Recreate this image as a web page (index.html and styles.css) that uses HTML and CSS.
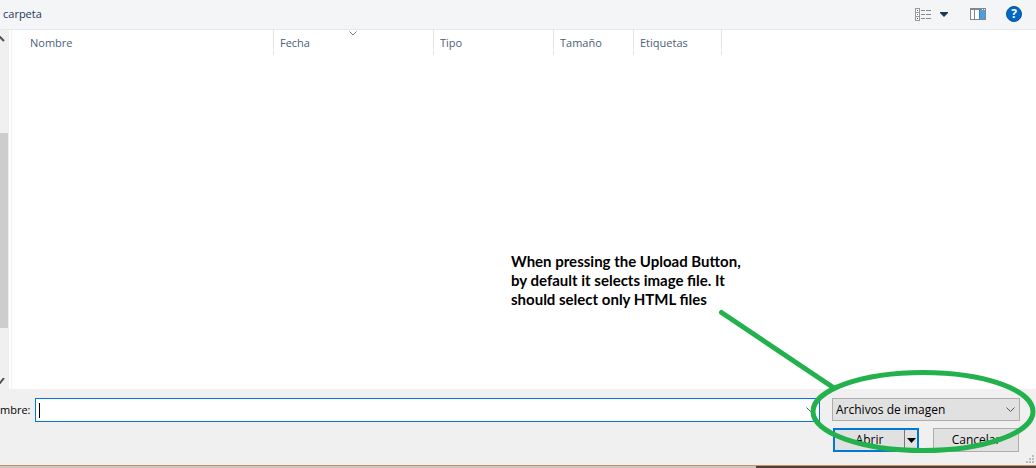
FILE: index.html
```html
<!DOCTYPE html>
<html lang="es">
<head>
<meta charset="utf-8">
<title>Abrir</title>
<link rel="stylesheet" href="styles.css">
</head>
<body>
<div class="dialog">
  <header class="toolbar">
    <a class="new-folder" href="#">carpeta</a>
    <button class="tool view" type="button" aria-label="Cambiar la vista">
      <svg width="16" height="13" viewBox="0 0 16 13" shape-rendering="crispEdges">
        <path d="M.5.5h4v12h-4zM0 4.500h5M0 8.500h5" fill="#fff" stroke="#999"/>
        <path d="M6 2.500h4m1 0h5M6 6.500h4m1 0h5M6 10.500h4m1 0h5" stroke="#888"/>
        <path d="M2 2h1v1H2z" fill="#555"/><path d="M2 6h1v1H2z" fill="#3b86d0"/><path d="M2 10h1v1H2z" fill="#a33"/>
      </svg>
    </button>
    <button class="tool more" type="button" aria-label="Más opciones">
      <svg width="8" height="5" viewBox="0 0 8 5"><path d="M0 0h8v1L4 5 0 1z" fill="#1e395b"/></svg>
    </button>
    <button class="tool pane" type="button" aria-label="Panel de vista previa">
      <svg width="16" height="12" viewBox="0 0 16 12" shape-rendering="crispEdges">
        <path d="M0 0h16v12H0z" fill="#858585"/>
        <path d="M1 2h3v9H1zM5 2h4v9H5z" fill="#fff"/><path d="M9 2h6v9H9z" fill="#4a9fe3"/><path d="M9 2h1v9H9z" fill="#2f82cc"/>
        <path d="M12 1h1v1h-1zM14 1h1v1h-1z" fill="#fff"/>
      </svg>
    </button>
    <button class="tool help" type="button" aria-label="Ayuda">?</button>
  </header>

  <main class="browser">
    <div class="scrollbar">
      <svg width="5" height="6" viewBox="0 0 5 6"><path d="M-1 0 4 5" fill="none" stroke="#505050" stroke-width="2"/></svg>
      <div class="thumb"></div>
      <svg width="5" height="6" viewBox="0 0 5 6"><path d="M-1 5.500 0 5 4 0" fill="none" stroke="#505050" stroke-width="2"/></svg>
    </div>
    <div class="files">
      <table class="columns">
        <thead>
          <tr>
            <th class="name" scope="col">Nombre</th>
            <th class="date" scope="col">Fecha<svg class="sort" width="8" height="5" viewBox="0 0 8 5"><path d="M.5.5 4 4 7.500.5" fill="none" stroke="#777"/></svg></th>
            <th class="type" scope="col">Tipo</th>
            <th class="size" scope="col">Tamaño</th>
            <th class="tags" scope="col">Etiquetas</th>
          </tr>
        </thead>
      </table>
    </div>
  </main>

  <form class="footer">
    <div class="row">
      <label class="label" for="filename">mbre:</label>
      <div class="filename">
        <input id="filename" type="text" autocomplete="off">
        <span class="caret"></span>
        <svg class="chevron" width="9" height="6" viewBox="0 0 9 6"><path d="M.5.5l4 4 4-4" fill="none" stroke="#555"/></svg>
      </div>
      <div class="filetype">
        <select aria-label="Tipo de archivo"><option>Archivos de imagen</option></select>
        <svg class="chevron" width="9" height="6" viewBox="0 0 9 6"><path d="M.5.5l4 4 4-4" fill="none" stroke="#555"/></svg>
      </div>
    </div>
    <div class="row actions">
      <div class="split">
        <button class="open" type="button">Abrir</button>
        <button class="drop" type="button" aria-label="Opciones de abrir"><svg width="9" height="5" viewBox="0 0 9 5"><path d="M0 0h9L4.500 5z"/></svg></button>
      </div>
      <button class="cancel" type="button">Cancelar</button>
    </div>
    <svg class="grip" width="8" height="8" viewBox="0 0 8 8" shape-rendering="crispEdges"><path d="M6 0h2v2H6zM3 3h2v2H3zM6 3h2v2H6zM0 6h2v2H0zM3 6h2v2H3zM6 6h2v2H6z" fill="#bcbcbc"/></svg>
  </form>
  <div class="behind"><div class="photo"></div></div>

  <div class="note">
    <p>When pressing the Upload Button,<br>by default it selects image file. It<br>should select only HTML files</p>
    <svg width="326" height="164" viewBox="710 304 326 164"><g fill="none" stroke="#22b14c" stroke-width="5" stroke-linecap="round"><path d="M721.500 312.500 834 388"/><ellipse cx="923" cy="411.500" rx="110" ry="39"/></g></svg>
  </div>
</div>
</body>
</html>
```
FILE: styles.css
```css
* { box-sizing: border-box; }

body {
  margin: 0;
  font: 12px/16px "Open Sans", "Noto Sans", sans-serif;
  color: #000;
}

button, input, select {
  margin: 0;
  padding: 0;
  font: inherit;
  color: inherit;
}

svg { display: block; }

.dialog {
  position: relative;
  display: flex;
  flex-direction: column;
  height: 100vh;
  overflow: hidden;
  background: #fff;
}

.toolbar {
  display: flex;
  align-items: center;
  height: 30px;
  padding: 0 14px 1px 3px;
  background: #f4f5f7;
  border-bottom: 1px solid #e5e8ea;
}

.new-folder {
  margin-right: auto;
  color: #1e395b;
  font-size: 11px;
  text-decoration: none;
}

.tool {
  border: 0;
  background: none;
}

.more { margin: 0 22px 0 9px; }
.pane { margin-right: 20px; }

.help {
  width: 16px;
  height: 16px;
  border: 1px solid #0b5394;
  border-radius: 50%;
  background: #0067c6;
  color: #fff;
  font-size: 12px;
  font-weight: 700;
  line-height: 14px;
}

.browser {
  display: flex;
  flex: 1;
  min-height: 0;
}

.scrollbar {
  display: flex;
  flex-direction: column;
  justify-content: space-between;
  width: 9px;
  padding: 6px 1px 5px 0;
  background: #f0f0f0;
}

.thumb {
  flex: 0 0 56%;
  margin-top: 41px;
  background: #cdcdcd;
}

.files {
  flex: 1;
  margin-left: 2px;
  border-left: 1px solid #f3f3f3;
}

.columns {
  table-layout: fixed;
  width: 710px;
  border-collapse: separate;
  border-spacing: 0;
}

.columns th {
  position: relative;
  height: 25px;
  padding: 0 6px;
  border-right: 1px solid #e5e5e5;
  color: #4c607a;
  font-size: 11px;
  font-weight: 400;
  text-align: left;
}

.columns .name { width: 262px; padding-left: 18px; }
.date { width: 160px; }
.type { width: 120px; }
.size { width: 80px; }
.tags { width: 88px; }

.sort {
  position: absolute;
  top: 1px;
  left: 75px;
}

.footer {
  position: relative;
  padding: 9px 16px 13px 0;
  background: #f0f0f0;
}

.row {
  display: flex;
  align-items: center;
}

.label {
  width: 35px;
  font-size: 11px;
}

.filename {
  position: relative;
  flex: 1;
  height: 24px;
  margin-right: 12px;
}

.filename input {
  display: block;
  width: 100%;
  height: 24px;
  padding: 0 20px 0 4px;
  border: 1px solid #0078d7;
  outline: 0;
  background: #fff;
}

.caret {
  position: absolute;
  top: 5px;
  left: 4px;
  width: 1px;
  height: 15px;
  background: #000;
}

.chevron {
  position: absolute;
  top: 9px;
  right: 5px;
  pointer-events: none;
}

.filetype {
  position: relative;
  width: 188px;
  height: 24px;
}

.filetype select {
  display: block;
  width: 100%;
  height: 23px;
  padding: 0 20px 0 3px;
  border: 1px solid #adadad;
  border-radius: 0;
  background: #e1e1e1;
  appearance: none;
}

.actions {
  justify-content: flex-end;
  gap: 14px;
  margin-top: 6px;
  padding-right: 1px;
}

.split {
  display: flex;
  width: 86px;
  height: 24px;
  border: 2px solid #0078d7;
  background: #e1e1e1;
}

.open {
  flex: 1;
  border: 0;
  border-right: 1px solid #777;
  background: none;
}

.drop {
  display: flex;
  align-items: center;
  justify-content: center;
  width: 12px;
  border: 0;
  background: none;
}

.cancel {
  width: 86px;
  height: 24px;
  border: 1px solid #adadad;
  background: #e1e1e1;
}

.grip {
  position: absolute;
  right: 2px;
  bottom: 2px;
}

.behind {
  display: flex;
  flex-shrink: 0;
  justify-content: flex-end;
  height: 3px;
  border-top: 1px solid #d08c5c;
  background: #c8c8c8;
}

.photo {
  width: 27%;
  background: #4a403e;
}

.note {
  position: absolute;
  right: 0;
  bottom: 0;
  width: 525px;
  pointer-events: none;
}

.note p {
  margin: 0 0 -5px;
  font: 700 15px/19px Lato, "Open Sans", sans-serif;
}

.note svg { margin-left: auto; }
```
